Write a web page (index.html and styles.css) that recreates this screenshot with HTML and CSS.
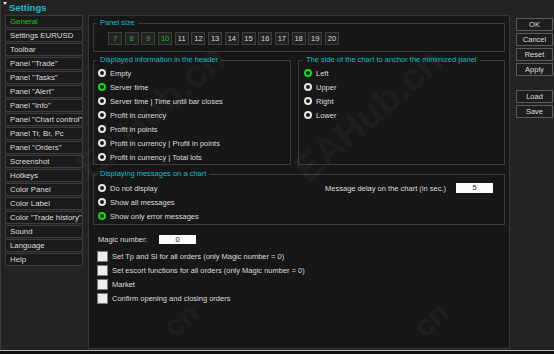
FILE: index.html
```html
<!DOCTYPE html>
<html lang="en">

<head>
    <meta charset="UTF-8">
    <meta name="viewport" content="width=device-width, initial-scale=1.0">
    <title>Settings</title>
    <link rel="stylesheet" href="styles.css">
</head>

<body>
    <div class="window">
        <div class="titlebar">
            <span class="caret"></span>
            <span class="title">Settings</span>
        </div>

        <div class="frame">
            <ul class="nav">
                <li class="active">General</li>
                <li>Settings EURUSD</li>
                <li>Toolbar</li>
                <li>Panel "Trade"</li>
                <li>Panel "Tasks"</li>
                <li>Panel "Alert"</li>
                <li>Panel "Info"</li>
                <li>Panel "Chart control"</li>
                <li>Panel Tr, Br, Pc</li>
                <li>Panel "Orders"</li>
                <li>Screenshot</li>
                <li>Hotkeys</li>
                <li>Color Panel</li>
                <li>Color Label</li>
                <li>Color "Trade history"</li>
                <li>Sound</li>
                <li>Language</li>
                <li>Help</li>
            </ul>

            <div class="panel">
                <fieldset class="group size-group">
                    <legend>Panel size</legend>
                    <div class="sizes">
                        <span class="size on">7</span>
                        <span class="size on">8</span>
                        <span class="size on">9</span>
                        <span class="size on">10</span>
                        <span class="size">11</span>
                        <span class="size">12</span>
                        <span class="size">13</span>
                        <span class="size">14</span>
                        <span class="size">15</span>
                        <span class="size">16</span>
                        <span class="size">17</span>
                        <span class="size">18</span>
                        <span class="size">19</span>
                        <span class="size">20</span>
                    </div>
                </fieldset>

                <div class="group-row">
                    <fieldset class="group header-group">
                        <legend>Displayed information in the header</legend>
                        <div class="option"><span class="radio"></span>Empty</div>
                        <div class="option"><span class="radio checked"></span>Server time</div>
                        <div class="option"><span class="radio"></span>Server time | Time until bar closes</div>
                        <div class="option"><span class="radio"></span>Profit in currency</div>
                        <div class="option"><span class="radio"></span>Profit in points</div>
                        <div class="option"><span class="radio"></span>Profit in currency | Profit in points</div>
                        <div class="option"><span class="radio"></span>Profit in currency | Total lots</div>
                    </fieldset>

                    <fieldset class="group anchor-group">
                        <legend>The side of the chart to anchor the minimized panel</legend>
                        <div class="option"><span class="radio checked"></span>Left</div>
                        <div class="option"><span class="radio"></span>Upper</div>
                        <div class="option"><span class="radio"></span>Right</div>
                        <div class="option"><span class="radio"></span>Lower</div>
                    </fieldset>
                </div>

                <fieldset class="group msg-group">
                    <legend>Displaying messages on a chart</legend>
                    <div class="msg-body">
                        <div class="msg-options">
                            <div class="option"><span class="radio"></span>Do not display</div>
                            <div class="option"><span class="radio"></span>Show all messages</div>
                            <div class="option"><span class="radio checked"></span>Show only error messages</div>
                        </div>
                        <div class="delay">
                            <span>Message delay on the chart (in sec.)</span>
                            <span class="field">5</span>
                        </div>
                    </div>
                </fieldset>

                <div class="magic">
                    <span class="magic-label">Magic number:</span>
                    <span class="field">0</span>
                </div>

                <div class="checks">
                    <div class="check"><span class="box"></span>Set Tp and Sl for all orders (only Magic number = 0)</div>
                    <div class="check"><span class="box"></span>Set escort functions for all orders (only Magic number = 0)</div>
                    <div class="check"><span class="box"></span>Market</div>
                    <div class="check"><span class="box"></span>Confirm opening and closing orders</div>
                </div>
            </div>

            <div class="actions">
                <button>OK</button>
                <button>Cancel</button>
                <button>Reset</button>
                <button>Apply</button>
                <button class="spaced">Load</button>
                <button>Save</button>
            </div>
        </div>

        <!-- watermark overlay from the original capture -->
        <span class="wm wm-1">EAHub.cn</span>
        <span class="wm wm-2">EAHub.cn</span>
        <span class="wm wm-3">cn</span>
        <span class="wm wm-4">cn</span>
    </div>
    <div class="chart-strip"></div>
</body>

</html>
```

FILE: styles.css
```css
body {
    margin: 0;
    background: #0e0e0e;
    font-family: "Liberation Sans", Arial, sans-serif;
    font-size: 7.5px;
    color: #dcdcdc;
}

.window {
    position: relative;
    width: 554px;
    height: 350px;
    box-sizing: border-box;
    border-left: 1px solid #3a3a3a;
    background: #232323;
    overflow: hidden;
}

.titlebar {
    height: 15px;
    display: flex;
    align-items: center;
}

.caret {
    align-self: flex-start;
    margin: 2px 2px 0 2px;
    border-left: 2.5px solid transparent;
    border-right: 2.5px solid transparent;
    border-top: 3px solid #e0e0e0;
}

.title {
    font-size: 9.5px;
    font-weight: bold;
    color: #22bcc6;
}

.frame {
    display: flex;
    height: 335px;
    padding-left: 4px;
}

.nav {
    width: 78px;
    margin: 0;
    padding: 0;
    list-style: none;
    display: flex;
    flex-direction: column;
    gap: 1px;
    font-size: 7.8px;
}

.nav li {
    height: 13px;
    box-sizing: border-box;
    border: 1px solid #3c3c3c;
    background: #1b1b1b;
    padding-left: 4px;
    line-height: 11px;
    white-space: nowrap;
}

.nav .active {
    color: #22c222;
}

.panel {
    margin-left: 5px;
    width: 422px;
    height: 334px;
    box-sizing: border-box;
    border: 1px solid #363636;
    background: #171717;
    padding: 2px 4px 0 4px;
}

.group {
    margin: 0;
    border: 1px solid #3a3a3a;
    padding: 0 3px;
    min-width: 0;
}

.group legend {
    padding: 0 3px;
    line-height: 10px;
    color: #1db8c2;
}

.size-group {
    padding: 4px 3px 6px;
}

.sizes {
    display: flex;
    gap: 2.7px;
    margin-left: 11px;
}

.size {
    width: 14px;
    height: 13px;
    box-sizing: border-box;
    border: 1px solid #3e3e3e;
    background: #232323;
    text-align: center;
    line-height: 11px;
    color: #d8d8d8;
}

.size.on {
    color: #1fb81f;
}

.group-row {
    display: flex;
    gap: 7px;
    margin-top: 3px;
}

.header-group {
    width: 198px;
    box-sizing: border-box;
    padding: 1px 3px 0;
}

.anchor-group {
    flex: 1;
    padding: 1px 3px 0 4px;
}

.option {
    height: 14px;
    display: flex;
    align-items: center;
    gap: 4px;
    white-space: nowrap;
}

.radio {
    width: 8px;
    height: 8px;
    box-sizing: border-box;
    margin-left: 1px;
    border: 2px solid #e6e6e6;
    border-radius: 50%;
    background: #1a1a1a;
}

.radio.checked {
    border-color: #14dc14;
}

.msg-group {
    margin-top: 4px;
    padding: 2px 3px 1px;
}

.msg-body {
    display: flex;
    align-items: flex-start;
}

.delay {
    margin-left: auto;
    margin-right: 8px;
    height: 14px;
    display: flex;
    align-items: center;
    gap: 10px;
}

.field {
    width: 37px;
    height: 10px;
    background: #fbfbfb;
    color: #222;
    text-align: center;
    line-height: 10px;
}

.magic {
    margin-top: 7px;
    padding-left: 5px;
    height: 14px;
    display: flex;
    align-items: center;
}

.magic-label {
    width: 61px;
}

.magic .field {
    height: 9px;
    line-height: 9px;
}

.checks {
    margin-top: 3px;
}

.check {
    height: 14px;
    display: flex;
    align-items: center;
    gap: 4px;
    padding-left: 4px;
}

.box {
    width: 11px;
    height: 11px;
    box-sizing: border-box;
    border: 1px solid #7a7a7a;
    background: #ececec;
}

.actions {
    margin-left: 6px;
    width: 37px;
    padding-top: 3px;
    display: flex;
    flex-direction: column;
    gap: 2px;
}

.actions button {
    height: 13px;
    padding: 0;
    border: 1px solid #5a5a5a;
    background: #1e1e1e;
    color: #dcdcdc;
    font-family: inherit;
    font-size: 7.5px;
    line-height: 11px;
}

.actions .spaced {
    margin-top: 12px;
}

.wm {
    position: absolute;
    transform: translate(-50%, -50%) rotate(-41deg);
    font-size: 38px;
    line-height: 1;
    font-weight: bold;
    color: rgba(255, 255, 255, 0.05);
    white-space: nowrap;
    pointer-events: none;
}

.wm-1 { left: 150px; top: 112px; }
.wm-2 { left: 367px; top: 115px; }
.wm-3 { left: 180px; top: 320px; font-size: 30px; }
.wm-4 { left: 430px; top: 320px; font-size: 30px; }

.chart-strip {
    width: 554px;
    height: 4px;
    border-top: 1px solid #bdbdbd;
    background: #101010;
}
```
